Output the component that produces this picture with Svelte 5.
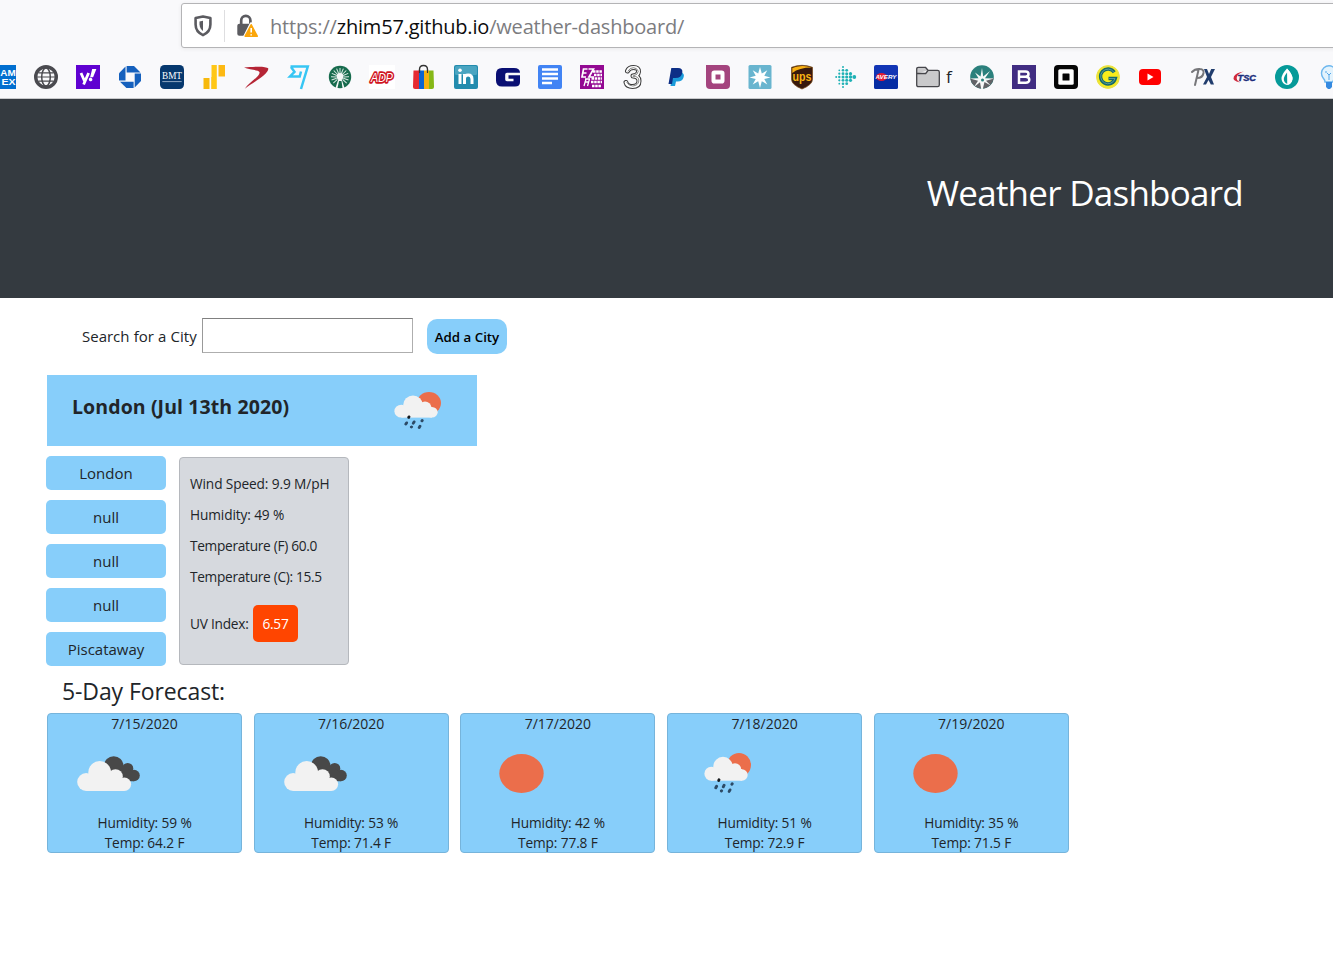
<script>
  const cities = ['London', 'null', 'null', 'null', 'Piscataway'];
  const details = ['Wind Speed: 9.9 M/pH', 'Humidity: 49 %', 'Temperature (F) 60.0', 'Temperature (C): 15.5'];
  const days = [
    { date: '7/15/2020', icon: 'cloud', humidity: '59', temp: '64.2' },
    { date: '7/16/2020', icon: 'cloud', humidity: '53', temp: '71.4' },
    { date: '7/17/2020', icon: 'sun', humidity: '42', temp: '77.8' },
    { date: '7/18/2020', icon: 'rain', humidity: '51', temp: '72.9' },
    { date: '7/19/2020', icon: 'sun', humidity: '35', temp: '71.5' }
  ];
  const fitbit = [
    [10, 2, 1], [10, 5.3, 1.3], [10, 8.7, 1.4], [10, 12, 1.5], [10, 15.3, 1.4], [10, 18.7, 1.3], [10, 22, 1],
    [6.3, 5.3, 0.9], [6.3, 8.7, 1.1], [6.3, 12, 1.2], [6.3, 15.3, 1.1], [6.3, 18.7, 0.9],
    [3.2, 12, 1], [13.700, 5.3, 1.4], [13.700, 8.7, 1.5], [13.700, 12, 1.6], [13.700, 15.3, 1.5], [13.700, 18.7, 1.4],
    [17.500, 8.7, 1.6], [17.500, 12, 1.7], [17.500, 15.3, 1.6], [21.300, 12, 1.9]
  ];
  const rays = [0, 22, 44, 66, 88, 110, 132, -22, -44, -66, -88, -110, -132];
  let city = $state('');
</script>

{#snippet rain(h)}
  <svg class="wx" width="48" height={h} viewBox="0 0 48 40" preserveAspectRatio="none">
    <circle cx="35" cy="12" r="12" fill="#eb6e4b" />
    <g fill="#f2f2f2">
      <circle cx="7.400" cy="20.700" r="7" /><circle cx="19" cy="13.500" r="9.700" /><circle cx="31" cy="16.500" r="6.200" /><circle cx="38" cy="22" r="5.700" />
      <path d="M7.400 16h30.600v11.700H7.400z" />
    </g>
    <g stroke-width="2.900" stroke-linecap="round">
      <path d="M15 26.800l-.3 .7" stroke="#16191d" />
      <path d="M12.600 33.300l-.8 1.500M20.100 32.200l-.8 1.600M17.600 37.700l-.2.200M28.200 30.800l-.3.500M26 36.900l-.8 1.500" stroke="#2c4a66" />
    </g>
  </svg>
{/snippet}

<div class="page">
  <div class="chrome">
    <div class="urlbar">
      <svg class="shield" width="20" height="22" viewBox="0 0 20 22">
        <path d="M10 1.600l7.400 1.500v6.400c0 5-2.900 8.600-7.400 10.600-4.500-2-7.400-5.600-7.400-10.600V3.100z" fill="none" stroke="#5b5b60" stroke-width="2.600" stroke-linejoin="round" />
        <path d="M10 5.800v10.100c-2-1.400-3.500-3.600-3.500-6.600V6.500z" fill="#5b5b60" />
      </svg>
      <span class="divider"></span>
      <svg class="lock" width="23" height="24" viewBox="0 0 23 24">
        <path d="M5.200 11V6.500a4.600 4.600 0 0 1 9.200 0V11" fill="none" stroke="#5b5b60" stroke-width="2.700" />
        <rect x="1.300" y="9.800" width="15.500" height="12" rx="2" fill="#5b5b60" />
        <path d="M15.200 10.200l6.300 12.600H8.900z" fill="#ffa817" stroke="#fff" stroke-width="3.600" stroke-linejoin="round" />
        <path d="M15.200 10.800l6 11.400H9.200z" fill="#fba60a" stroke="#fba60a" stroke-width="1.600" stroke-linejoin="round" />
        <path d="M15.200 14v4.400M15.200 20.200v1.300" stroke="#fff" stroke-width="1.600" />
      </svg>
      <span class="url">https://<b>zhim57.github.io</b>/weather-dashboard/</span>
    </div>

    <div class="bookmarks">
      <svg viewBox="0 0 24 24"><rect width="24" height="24" fill="#016fd0" /><g fill="#fff" font-family="Liberation Sans" font-weight="700" font-size="9.500"><text x="8.300" y="11" textLength="15.400" lengthAdjust="spacingAndGlyphs">AM</text><text x="9.500" y="20" textLength="14" lengthAdjust="spacingAndGlyphs">EX</text></g></svg>
      <svg viewBox="0 0 24 24"><circle cx="12" cy="12" r="10.300" fill="#f8f8fa" stroke="#4a4a4f" stroke-width="3.400" /><g fill="none" stroke="#4a4a4f" stroke-width="1.500"><ellipse cx="12" cy="12" rx="4.300" ry="9" /><path d="M3 12h18M4.500 7.800h15M4.500 16.200h15" stroke-width="1.200" /></g></svg>
      <svg viewBox="0 0 24 24"><rect width="24" height="24" fill="#5f01d1" /><path d="M5 8l3.600 8.200M12.600 8L7.600 19.500" stroke="#fff" stroke-width="2.800" /><path d="M16.200 4h4.200l-3.300 8.300h-3zM12.800 14.400a1.800 1.800 0 1 1 0 .1z" fill="#fff" /></svg>
      <svg viewBox="0 0 24 24"><g fill="#1560bd"><path d="M8.600 1H16l6.500 6.400H8.600z" /><path d="M23 8.500V16l-6.300 6.600V8.500z" /><path d="M15.600 23H8.400L2 16.800h13.600z" /><path d="M1 15.600V8.200L7.500 1.600v14z" /></g></svg>
      <svg viewBox="0 0 24 24"><rect width="24" height="24" rx="4.500" fill="#06386e" /><text x="2" y="14.300" textLength="20" lengthAdjust="spacingAndGlyphs" font-family="Liberation Serif" font-size="9.600" fill="#fff">BMT</text><path d="M2.300 16.600h19.400" stroke="#9fb4cc" stroke-width=".9" /></svg>
      <svg viewBox="0 0 24 24"><path d="M1.500 13h6v11h-6z" fill="#f7b90c" /><path d="M9.500 0h5.300v24H9.500z" fill="#ffc716" /><path d="M9.500 12v12H9V12z" fill="#f7b90c" /><path d="M16.500 0H23v11.500h-6.500z" fill="#fdb913" /></svg>
      <svg viewBox="0 0 24 24"><path d="M0 2.500c9-.8 22-1.800 24.300 1C24.800 9 10 17 .8 23.700 5 17.500 16.500 11 15.500 7.300 14.800 4.500 6 5.200 0 2.500z" fill="#b52535" /></svg>
      <svg viewBox="0 0 24 24"><path d="M4.500 1.500H21.800L15 24M5 2l3.500 4.800L4 11.500h9.700l1.300-5" fill="none" stroke="#37c6f4" stroke-width="2.500" /></svg>
      <svg viewBox="0 0 24 24"><circle cx="12" cy="12" r="11.200" fill="#176b4d" /><g stroke="#dcebe5" stroke-width="1">{#each rays as r}<path d="M12 8.500V3" transform="rotate({r} 12 12)" />{/each}</g><path d="M7.500 23L11 12h2l3.500 11z" fill="#f5f8f7" /><path d="M11 16h2.500l1 7h-5z" fill="#176b4d" /><circle cx="12" cy="11.500" r="3.400" fill="#f5f8f7" /></svg>
      <svg viewBox="0 0 24 24"><rect x="-1" width="26" height="24" fill="#fff" /><text x="1" y="16.500" textLength="22" lengthAdjust="spacingAndGlyphs" font-family="Liberation Sans" font-style="italic" font-size="13" fill="none" stroke="#d0161f" stroke-width="3.400" stroke-linejoin="round">ADP</text><text x="1" y="16.500" textLength="22" lengthAdjust="spacingAndGlyphs" font-family="Liberation Sans" font-style="italic" font-size="13" fill="#fff">ADP</text></svg>
      <svg viewBox="0 0 24 24"><path d="M7.500 7V4.500q0-4 4-4t4 4V7" fill="none" stroke="#333" stroke-width="1.400" /><path d="M1.500 5.500H7V24H3q-2 0-2-2z" fill="#e52b32" /><path d="M7 5.500h5V24H7z" fill="#0b64d2" /><path d="M12 5.500h5V24h-5z" fill="#f5b011" /><path d="M17 5.500h4.500L22 22q0 2-2 2h-3z" fill="#86b817" /><path d="M7.500 8V5M15.500 8V5" stroke="#333" stroke-width="1.200" /></svg>
      <svg viewBox="0 0 24 24"><rect width="24" height="24" rx="2" fill="#238cae" /><rect x="1" y="1" width="22" height="9" rx="1.500" fill="#4aa5c1" /><path d="M6 9v10M10.500 9v10M10.500 19v-5.500q0-3.500 3.700-3.500 3.800 0 3.800 4v5" fill="none" stroke="#fff" stroke-width="3" /><circle cx="6" cy="5.200" r="1.800" fill="#fff" /></svg>
      <svg viewBox="0 0 24 24"><path d="M6 3h12q6 0 6 4.700v9.300q0 4.500-5 4.500H6q-6 0-6-6V9q0-6 6-6z" fill="#0a0f73" /><path d="M11 7.700h13v2.600h-11.500v3.400H17.500v2.500H11q-1.800 0-1.800-1.700V9.500q0-1.800 1.800-1.800z" fill="#f9f9fb" /></svg>
      <svg viewBox="0 0 24 24"><rect width="24" height="24" rx="2" fill="#4284f4" /><path d="M4 4.500h16M4 9h16M4 13.500h16M4 18h10" stroke="#fff" stroke-width="2.400" /></svg>
      <svg viewBox="0 0 24 24"><rect width="24" height="24" fill="#930992" /><g fill="none" stroke="#fff"><path d="M7.500 4H3.500L2 12h4M3 8h3.500M8.500 4h5L9 12h5" stroke-width="1.700" /><path d="M13 6.500h9M14 10h8M11.500 13.500H22M11 17h11M12 21h9.500" stroke-width="2.300" stroke-dasharray="2.500 .7" /><path d="M5 14h5M4.500 17h4.500M6 14l-2 7M9.500 14l-2 7" stroke-width="1.300" /></g></svg>
      <svg viewBox="0 0 24 24"><g fill="none" stroke-linejoin="round" stroke-linecap="round"><path d="M5.500 6q1.500-3.500 6-3.500 5.500 0 5 4.200-.5 3.800-5.500 4.300 6 0 6 5 0 5.500-6.500 5.500-5.500 0-6.500-4" stroke="#3b3b3b" stroke-width="5" /><path d="M5.500 6q1.500-3.500 6-3.500 5.500 0 5 4.200-.5 3.800-5.500 4.300 6 0 6 5 0 5.500-6.500 5.500-5.500 0-6.500-4" stroke="#fff" stroke-width="3" /><path d="M6 6q2-3.500 5.500-3.300t4.800 3.500q0 3.500-5.500 5 6.500 0 6 4.800-.5 4.500-6 5-4 0-6-3.500" stroke="#666" stroke-width=".8" /></g></svg>
      <svg viewBox="0 0 24 24"><path d="M8.500 7H17q4 1.500 2.500 5.500-1 4-6 4H12L11 21H6.500z" fill="#1b9cda" /><path d="M7.300 3H14q5 0 4.300 4.500-.8 5.500-7 5.500H9L8 19H4.500z" fill="#0d2f86" /></svg>
      <svg viewBox="0 0 24 24"><path d="M0 0h20q4 0 4 4v16q0 4-4 4H4q-4 0-4-4z" fill="#a4447e" /><rect x="7.500" y="7.500" width="9" height="9" rx=".8" fill="none" stroke="#fff" stroke-width="4" /></svg>
      <svg viewBox="0 0 24 24"><rect x=".5" width="23" height="24" rx="1.500" fill="#69b5cf" /><path d="M12 2l1.800 6.500 5.500-3.200-3 5.400 6.200 1.800-6.200 1.400 3 5.500-5.500-3.200L12 23l-1.800-6.800-5.500 3.200 3-5.500-6.200-1.400 6.200-1.800-3-5.400 5.500 3.200z" fill="#fff" /></svg>
      <svg viewBox="0 0 24 24"><path d="M1.500 2.300q10.500-4 21 0v12q0 5.500-10.500 9.700Q1.500 19.800 1.500 14.300z" fill="#38190d" /><path d="M2.300 3q8.700-3.500 19.500-.5Q9 2.500 2.300 8z" fill="#f8b013" /><path d="M1.500 2.300q10.500-4 21 0v12q0 5.500-10.500 9.700Q1.500 19.800 1.500 14.300z" fill="none" stroke="#774715" stroke-width=".7" /><text x="2.500" y="16.300" textLength="19" lengthAdjust="spacingAndGlyphs" font-family="Liberation Sans" font-weight="700" font-size="13" fill="#f9b414">ups</text></svg>
      <svg viewBox="0 0 24 24"><g fill="#1fb1b5">{#each fitbit as [x, y, r]}<circle cx={x + 1} cy={y} {r} />{/each}</g></svg>
      <svg viewBox="0 0 24 24"><rect width="24" height="24" rx="2" fill="#1235b5" /><path d="M0 13h24v9q0 2-2 2H2q-2 0-2-2z" fill="#062ca3" /><ellipse cx="7.500" cy="12" rx="5.500" ry="4" fill="#e21b35" /><text x="1.500" y="14" textLength="21" lengthAdjust="spacingAndGlyphs" font-family="Liberation Sans" font-weight="700" font-style="italic" font-size="5.500" fill="#fff">AVERY</text></svg>
      <svg viewBox="0 0 24 24"><path d="M.7 20V4q0-1.700 1.700-1.700h7l2.600 3h9.600q1.700 0 1.700 1.700v13q0 1.700-1.700 1.700H2.400Q.7 21.700.7 20zM.7 8.500h9l2.300-3" fill="#c9c9cb" stroke="#45454a" stroke-width="1.300" stroke-linejoin="round" /></svg>
      <span class="folder">f</span>
      <svg viewBox="0 0 24 24"><circle cx="12" cy="12" r="11.800" fill="#2b807c" /><path d="M.3 13.500L12 15l11.700-2A11.800 11.800 0 0 1 .3 13.500z" fill="#626367" /><path d="M12 3l1.200 8.500L20 6l-5 7.200 9 .3-8 2.200 5 5-6.500-3.600L12.800 24h-1.600l-1.200-6.700-6 4.700 4-6.300-8-2.200 8.500-.2L5 7.500l5.500 4z" fill="#f6f8f8" /><circle cx="12.500" cy="15" r="1.500" fill="#2b807c" /></svg>
      <svg viewBox="0 0 24 24"><rect width="24" height="24" fill="#412d82" /><path d="M7 6.500h6.500q3 0 3 2.600t-3 2.700H7M13.500 11.800q3.800 0 3.800 3t-3.800 2.900H7V5.300" fill="none" stroke="#fff" stroke-width="2.500" /></svg>
      <svg viewBox="0 0 24 24"><rect width="24" height="24" rx="4" fill="#060606" /><rect x="4.300" y="4.300" width="15.400" height="15.400" rx="1.500" fill="#fff" /><rect x="8.500" y="8.500" width="7" height="7" rx=".6" fill="#060606" /></svg>
      <svg viewBox="0 0 24 24"><circle cx="12" cy="12" r="11.800" fill="#f8ec1b" /><circle cx="12" cy="12" r="11" fill="none" stroke="#e2dc58" stroke-width="1" /><path d="M18.300 7.300A7.500 7.500 0 1 0 19.300 13.500H12.500" fill="none" stroke="#15696b" stroke-width="3.400" /><path d="M18 7.300A7.300 7.300 0 1 0 19 13.500H13" fill="none" stroke="#6da7a2" stroke-width=".8" /></svg>
      <svg viewBox="0 0 24 24"><rect x="1" y="4" width="22" height="16" rx="4" fill="#f00" /><path d="M9.500 8.500v7l6-3.500z" fill="#fff" /></svg>
      <svg class="apart" viewBox="0 0 24 24"><path d="M5 20L8.500 5M2 7q3-3.500 8-3 4 .3 3.500 4-.8 5-6.500 5" fill="none" stroke="#77777a" stroke-width="2" stroke-linecap="round" /><path d="M14 4h3l2 5 2.200-5H25l-4 8 3 7.500h-3.200L18.500 15l-2.500 4.500h-3l4-7.500z" fill="#213d6d" /></svg>
      <svg viewBox="0 0 24 24"><path d="M11 6.500Q3 7.500.9 11.500-1 16 7 17.500q-4-2.500-3.200-5.500Q5 8 11 6.500z" fill="#d0283b" /><text x="4.500" y="15.500" textLength="18.500" lengthAdjust="spacingAndGlyphs" font-family="Liberation Sans" font-weight="700" font-style="italic" font-size="9" fill="#1b2d7b" stroke="#1b2d7b" stroke-width=".4">TSC</text></svg>
      <svg viewBox="0 0 24 24"><circle cx="12" cy="12" r="12" fill="#069a99" /><path d="M12 3.500q6 6.500 5.500 10.500-.6 5-5.500 6-5-1-5.500-6Q6 10 12 3.500z" fill="#fff" /><path d="M12.500 7v12Q9 18 8.800 14q0-2.500 3.700-7z" fill="#069a99" /><path d="M12 3.500q6 6.500 5.500 10.500-.6 5-5 6z" fill="#fff" /></svg>
      <svg viewBox="0 0 24 24"><path d="M8 17q0-2-2-4.200A7.500 7.500 0 1 1 18 12.800Q16 15 16 17z" fill="#e3f3fd" stroke="#6db7ee" stroke-width="1.400" /><path d="M9 17h6v5l-2 2h-2l-2-2z" fill="#358ae0" /><path d="M12 15V9M10 8l2 2 2-2M8 7h2" stroke="#56a7e8" fill="none" /></svg>
    </div>
  </div>

  <header><h1>Weather Dashboard</h1></header>

  <main>
    <form class="search" onsubmit={(e) => e.preventDefault()}>
      <label for="city">Search for a City</label>
      <input id="city" bind:value={city} />
      <button>Add a City</button>
    </form>

    <section class="current">
      <h2>London (Jul 13th 2020)</h2>
      {@render rain(37)}
    </section>

    <div class="columns">
      <div class="cities">
        {#each cities as name}<button>{name}</button>{/each}
      </div>
      <div class="details">
        {#each details as line}<p>{line}</p>{/each}
        <p class="uv">UV Index: <span>6.57</span></p>
      </div>
    </div>

    <h3>5-Day Forecast:</h3>
    <div class="forecast">
      {#each days as day}
        <article>
          <span class="line date">{day.date}</span>
          <div class="icon {day.icon}">
            {#if day.icon === 'cloud'}
              <svg class="wx" width="63" height="35" viewBox="0 0 63 35">
                <g fill="#484848"><circle cx="36.700" cy="10" r="9.800" /><circle cx="50.700" cy="12.500" r="5.600" /><circle cx="57" cy="19.500" r="5.800" /><path d="M36 12h14l7 5v8.300H40z" /></g>
                <g fill="#f2f2f2"><circle cx="9.200" cy="26" r="9" /><circle cx="22.700" cy="16.500" r="11.400" /><circle cx="38.500" cy="20.500" r="7.300" /><circle cx="47.300" cy="28.200" r="6.800" /><path d="M9.200 20h29l9.100 8v7H9.200z" /></g>
              </svg>
            {:else if day.icon === 'rain'}
              {@render rain(40)}
            {:else}
              <svg class="wx" width="45" height="40" viewBox="0 0 45 40"><ellipse cx="22.500" cy="20.500" rx="22.200" ry="19.500" fill="#eb6e4b" /></svg>
            {/if}
          </div>
          <span class="line">Humidity: {day.humidity} %</span>
          <span class="line">Temp: {day.temp} F</span>
        </article>
      {/each}
    </div>
  </main>
</div>

<style>
  :global(body) { margin: 0; background: #fff; }
  .page { width: 1333px; height: 965px; overflow: hidden; font-family: 'Open Sans', 'Noto Sans', sans-serif; color: #212529; }
  .page * { box-sizing: border-box; }
  svg { display: block; flex: none; }
  .chrome { height: 99px; background: #f9f9fb; padding: 3px 0 0 181px; overflow: hidden; border-bottom: 1px solid #c9cacc; }
  .urlbar { height: 45px; width: 1170px; display: flex; align-items: center; border: 1px solid #b4b4b6; border-radius: 3px; background: #fff; box-shadow: 0 1px 4px rgba(0, 0, 0, 0.07); padding-left: 11px; }
  .shield { margin-top: 1px; }
  .divider { width: 1px; height: 32px; background: #dedee0; margin: 0 11px 0 11px; }
  .url { margin: 2px 0 0 11px; font-size: 20px; letter-spacing: -0.19px; color: #7c7c7f; white-space: nowrap; }
  .url b { font-weight: 400; color: #0c0c0d; }
  .bookmarks { display: flex; align-items: center; gap: 18px; margin: 17px 0 0 -189px; width: 1360px; height: 24px; }
  .bookmarks svg { width: 24px; height: 24px; overflow: visible; }
  .folder { font-size: 17px; width: 12px; margin: 0 -6px 0 -12px; line-height: 24px; }
  .bookmarks .apart { margin: 0 1px 0 10px; }
  header { height: 199px; background: #343a40; display: flex; justify-content: flex-end; padding: 67px 90px 0 0; }
  h1 { margin: 0; color: #fff; font-weight: 400; font-size: 35px; line-height: 54px; letter-spacing: -0.75px; }
  main { padding: 20px 0 0 46px; }
  .search { display: flex; align-items: flex-start; height: 57px; padding-left: 36px; }
  label { width: 120px; font-size: 15px; line-height: 36px; word-spacing: 0.3px; white-space: nowrap; }
  input { width: 211px; height: 35px; border: 1px solid #aeaeae; border-top-color: #808080; border-left-color: #999; background: #fff; outline: none; }
  .search button { width: 80px; height: 35px; margin: 1px 0 0 14px; border: 0; padding: 0; border-radius: 10px; background: #87cefa; color: #000; font: 600 13.300px/37px 'Open Sans', sans-serif; letter-spacing: 0; white-space: nowrap; }
  .current { width: 430px; height: 71px; margin-left: 1px; padding: 0 35px 0 25px; background: #87cefa; display: flex; justify-content: space-between; align-items: center; }
  h2 { margin: 0 0 7px; font-size: 19.500px; font-weight: 700; line-height: 28px; letter-spacing: 0.1px; }
  .columns { display: flex; margin-top: 10px; gap: 13px; }
  .cities { display: flex; flex-direction: column; gap: 10px; }
  .cities button { width: 120px; height: 34px; border: 0; padding: 0; border-radius: 5px; background: #87cefa; color: #212529; font: 15px/34px 'Open Sans', sans-serif; }
  .details { width: 170px; height: 208px; margin-top: 1px; border: 1px solid #b5b8bd; border-radius: 4px; background: #d6d9de; padding: 10px 0 0 10px; }
  p { margin: 0; height: 31px; line-height: 31px; font-size: 13.700px; letter-spacing: -0.12px; white-space: nowrap; }
  p:nth-child(3), p:nth-child(4) { letter-spacing: -0.3px; }
  p.uv { height: 37px; margin-top: 13px; display: flex; justify-content: space-between; width: 108px; line-height: 38px; letter-spacing: -0.25px; }
  .uv span { width: 45px; height: 37px; border-radius: 5px; background: #ff4500; color: #fff; text-align: center; }
  h3 { margin: 10px 0 7px 16px; font-size: 23px; font-weight: 400; line-height: 30px; letter-spacing: -0.1px; }
  .forecast { display: grid; grid-template-columns: repeat(5, 195px); gap: 11.700px; margin-left: 1px; }
  article { height: 140px; border: 1px solid #76b4db; border-radius: 4px; background: #87cefa; text-align: center; }
  .line { display: block; height: 20px; line-height: 20px; font-size: 13.700px; letter-spacing: -0.12px; white-space: nowrap; }
  .date { font-size: 14px; letter-spacing: 0; }
  .icon { height: 79px; padding: 19px 0 0 38px; }
  .icon.cloud { padding: 22px 0 0 29px; }
  .icon.rain { padding: 19px 0 0 36px; }
</style>
